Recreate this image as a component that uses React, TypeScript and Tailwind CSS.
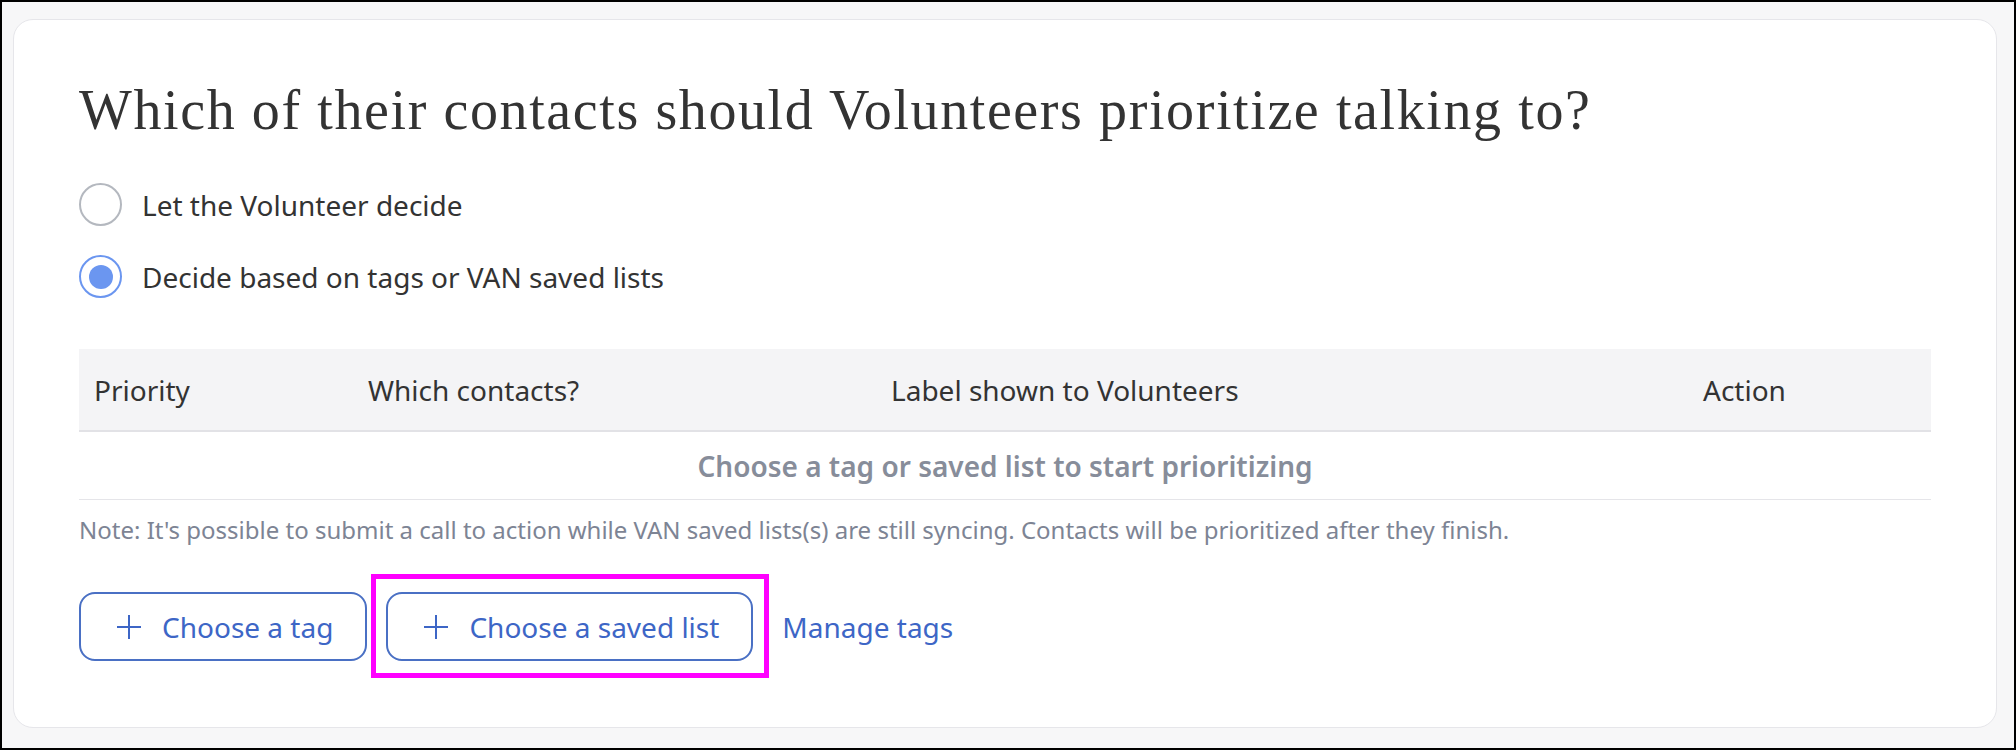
import React from 'react'

const sans = { fontFamily: '"Noto Sans", "Open Sans", sans-serif' }

const PlusIcon: React.FC = () => (
  <svg width="26" height="26" viewBox="0 0 26 26" fill="none" stroke="currentColor" strokeWidth="2">
    <path d="M13 1v24M1 13h24" />
  </svg>
)

interface RadioProps {
  label: string
  checked?: boolean
}

const Radio: React.FC<RadioProps> = ({ label, checked }) => (
  <label className="flex items-center gap-[20px]">
    {checked ? (
      <span className="flex h-[43px] w-[43px] items-center justify-center rounded-full border-2 border-[#6b96f0] bg-white">
        <span className="h-[24px] w-[24px] rounded-full bg-[#6b96f0]" />
      </span>
    ) : (
      <span className="h-[43px] w-[43px] rounded-full border-2 border-[#b4b8bf] bg-white" />
    )}
    <span className="text-[28px] leading-[40px] text-[#333]">{label}</span>
  </label>
)

const OutlineButton: React.FC<{ label: string }> = ({ label }) => (
  <button className="flex h-[69px] items-center gap-[20px] rounded-[16px] border-2 border-[#4a70c4] bg-white pl-[35px] pr-[32px] text-[28px] leading-[40px] text-[#3d66c6]">
    <PlusIcon />
    <span>{label}</span>
  </button>
)

export default function App() {
  const columns = ['Priority', 'Which contacts?', 'Label shown to Volunteers', 'Action']

  return (
    <div className="h-[750px] w-[2016px] border-2 border-black bg-[#f7f7f8] pb-[20px] pl-[11px] pr-[17px] pt-[17px]" style={sans}>
      <div className="h-full rounded-[20px] border border-[#e6e6ea] bg-white px-[65px] pb-[64px] pt-[60px]">
        <h1 className="text-[56px] leading-[60px] tracking-[1.6px] text-[#333]" style={{ fontFamily: '"Liberation Serif", "DejaVu Serif", serif' }}>
          Which of their contacts should Volunteers prioritize talking to?
        </h1>

        <div className="mt-[43px] flex flex-col gap-[29px]">
          <Radio label="Let the Volunteer decide" />
          <Radio label="Decide based on tags or VAN saved lists" checked />
        </div>

        <div className="mt-[51px]">
          <div className="grid h-[83px] grid-cols-[274px_523px_812px_1fr] items-center border-b-2 border-[#e2e2e6] bg-[#f4f4f6]">
            {columns.map((c) => (
              <div key={c} className="pl-[15px] text-[28px] leading-[40px] text-[#333]">
                {c}
              </div>
            ))}
          </div>
          <div className="flex h-[68px] items-center justify-center border-b border-[#e5e5e9] text-[28px] font-semibold leading-[40px] text-[#878d9a]">
            Choose a tag or saved list to start prioritizing
          </div>
        </div>

        <p className="mt-[14px] text-[24px] leading-[32px] text-[#7d8494]">
          Note: It's possible to submit a call to action while VAN saved lists(s) are still syncing. Contacts will be prioritized after they finish.
        </p>

        <div className="mt-[46px] flex items-center gap-[19px]">
          <OutlineButton label="Choose a tag" />
          <div className="relative">
            <OutlineButton label="Choose a saved list" />
            <div className="pointer-events-none absolute -bottom-[17px] -left-[15px] -right-[16px] -top-[18px] border-[5px] border-[#ff00ff]" />
          </div>
          <a className="ml-[10px] text-[28px] leading-[40px] text-[#3d66c6]">Manage tags</a>
        </div>
      </div>
    </div>
  )
}
